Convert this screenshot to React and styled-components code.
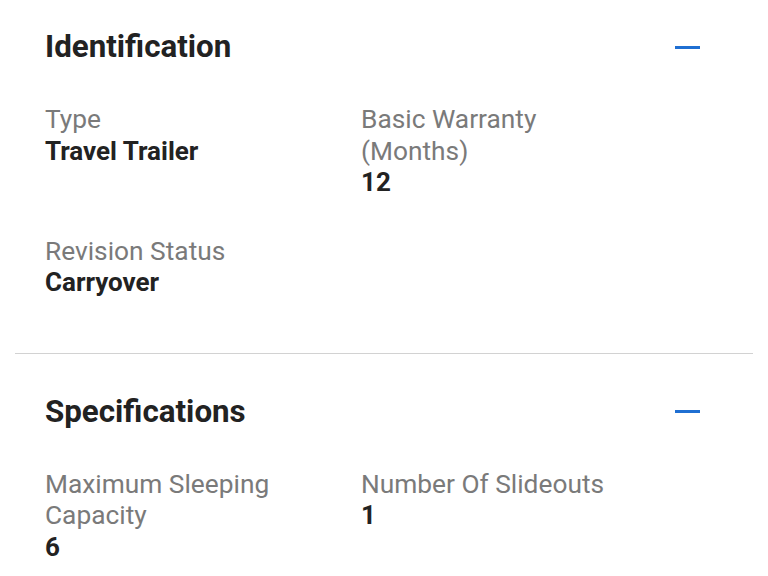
import React from "react";
import styled, { createGlobalStyle } from "styled-components";

const sections = [
  {
    id: "identification",
    title: "Identification",
    fields: [
      { label: "Type", value: "Travel Trailer" },
      { label: "Basic Warranty (Months)", value: "12" },
      { label: "Revision Status", value: "Carryover" },
    ],
  },
  {
    id: "specifications",
    title: "Specifications",
    fields: [
      { label: "Maximum Sleeping Capacity", value: "6" },
      { label: "Number Of Slideouts", value: "1" },
    ],
  },
];

const GlobalStyle = createGlobalStyle`
  html, body {
    margin: 0;
    padding: 0;
    background: #ffffff;
  }
  body {
    font-family: Roboto, "Noto Sans", "Liberation Sans", sans-serif;
    overflow: hidden;
  }
`;

const Page = styled.main`
  width: 768px;
  height: 576px;
  overflow: hidden;
  background: #fff;
`;

const Section = styled.section`
  padding: ${(p) => (p.$first ? "29px" : "40px")} 68px 54px 45px;
`;

const Header = styled.div`
  display: flex;
  align-items: center;
  justify-content: space-between;
`;

const Title = styled.h2`
  margin: 0;
  font-size: 31.3px;
  line-height: 36px;
  font-weight: 700;
  color: #222;
`;

const Toggle = styled.button`
  width: 25px;
  height: 20px;
  padding: 0;
  border: none;
  background: none;
  display: flex;
  align-items: center;
  cursor: pointer;

  &::before {
    content: "";
    display: block;
    width: 25px;
    height: 3px;
    background: #1f6fd2;
  }
`;

const Fields = styled.div`
  display: grid;
  grid-template-columns: 270px 270px;
  column-gap: 46px;
  row-gap: 37px;
  margin-top: 39px;
`;

const Field = styled.div`
  display: flex;
  flex-direction: column;
`;

const Label = styled.span`
  font-size: 26.3px;
  line-height: 31.5px;
  color: #7a7a7a;
`;

const Value = styled.span`
  font-size: 26px;
  line-height: 31.5px;
  font-weight: 700;
  color: #222;
`;

const Divider = styled.hr`
  margin: 0 15px;
  border: none;
  border-top: 1px solid #d2d2d2;
`;

export default function App() {
  return (
    <Page>
      <GlobalStyle />
      {sections.map((s, i) => (
        <React.Fragment key={s.id}>
          {i > 0 && <Divider />}
          <Section $first={i === 0}>
            <Header>
              <Title>{s.title}</Title>
              <Toggle aria-label="Collapse" />
            </Header>
            <Fields>
              {s.fields.map((f) => (
                <Field key={f.label}>
                  <Label>{f.label}</Label>
                  <Value>{f.value}</Value>
                </Field>
              ))}
            </Fields>
          </Section>
        </React.Fragment>
      ))}
    </Page>
  );
}
